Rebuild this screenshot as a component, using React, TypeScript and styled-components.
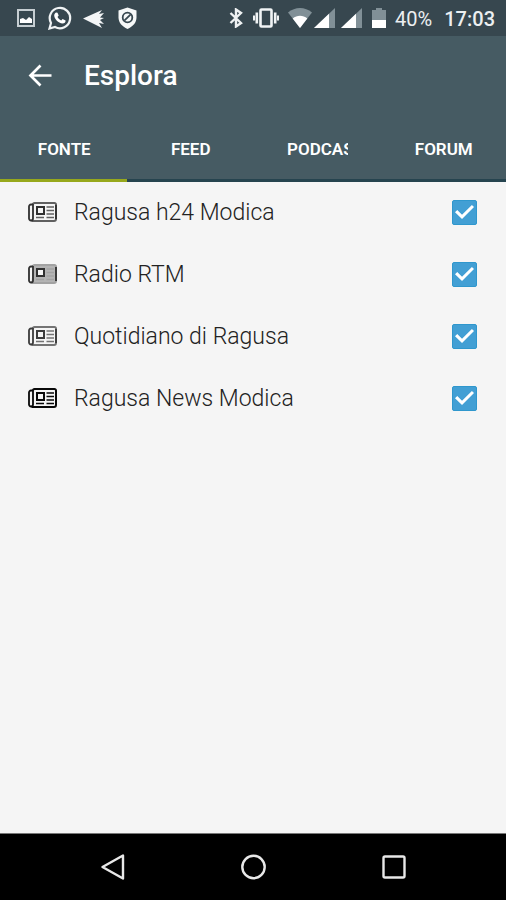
import React, { useState } from "react";
import styled, { createGlobalStyle } from "styled-components";

const GlobalStyle = createGlobalStyle`
  * { box-sizing: border-box; }
  body {
    margin: 0;
    background: #f5f5f5;
    font-family: Roboto, "Noto Sans", sans-serif;
  }
`;

const Screen = styled.div`
  min-height: 100vh;
  display: flex;
  flex-direction: column;
  background: #f5f5f5;
`;

const StatusBar = styled.div`
  height: 36px;
  padding: 0 11px 0 14px;
  display: flex;
  align-items: center;
  justify-content: space-between;
  background: #37474f;
  color: #eceff1;
`;

const Notifications = styled.div`
  display: flex;
  align-items: center;
  gap: 10px;
`;

const SystemIcons = styled.div`
  display: flex;
  align-items: center;
`;

const Glyph = styled.svg<{ $gap?: number }>`
  display: block;
  flex: none;
  margin-left: ${(p) => p.$gap ?? 0}px;
`;

const StatusText = styled.span<{ $gap: number; $strong?: boolean }>`
  margin-left: ${(p) => p.$gap}px;
  padding-top: 2px;
  font-size: 20px;
  line-height: 24px;
  font-weight: ${(p) => (p.$strong ? 500 : 400)};
`;

const Header = styled.header`
  background: #465b63;
  color: #fff;
`;

const TitleBar = styled.div`
  height: 80px;
  padding: 0 28px;
  display: flex;
  align-items: center;
  gap: 32px;
`;

const PlainButton = styled.button`
  display: flex;
  padding: 0;
  border: 0;
  background: none;
  color: inherit;
  cursor: pointer;
`;

const Title = styled.h1`
  margin: 0;
  font-size: 28px;
  line-height: 32px;
  font-weight: 500;
`;

const Tabs = styled.div`
  display: grid;
  grid-template-columns: repeat(4, 1fr);
`;

const Tab = styled.button<{ $active: boolean }>`
  height: 66px;
  min-width: 0;
  padding: 2px 32px 0 34px;
  border: 0;
  border-bottom: 3px solid ${(p) => (p.$active ? "#97a81c" : "#26444f")};
  background: none;
  color: #fff;
  font-family: inherit;
  font-size: 17px;
  line-height: 20px;
  font-weight: 600;
  cursor: pointer;
`;

const TabLabel = styled.span<{ $long: boolean }>`
  display: block;
  overflow: hidden;
  white-space: nowrap;
  text-align: ${(p) => (p.$long ? "left" : "center")};
`;

const List = styled.ul`
  flex: 1;
  margin: 0;
  padding: 0;
  list-style: none;
`;

const Row = styled.label`
  height: 62px;
  padding: 0 29px 2px 28px;
  display: flex;
  align-items: center;
  gap: 17px;
  color: #222;
`;

const SourceName = styled.span`
  flex: 1;
  padding-top: 1px;
  font-size: 23px;
  line-height: 28px;
  font-weight: 300;
`;

const Checkbox = styled.input`
  appearance: none;
  width: 25px;
  height: 25px;
  margin: 0;
  display: grid;
  place-content: center;
  border: 1px solid #2f97cd;
  border-radius: 2px;
  background: #fff;

  &:checked { background: #429fd4; }

  &:checked::before {
    content: "";
    width: 19px;
    height: 14px;
    background: #fff;
    clip-path: polygon(0 52%, 12% 36%, 37% 70%, 89% 0, 100% 14%, 37% 100%);
  }
`;

const NavBar = styled.nav`
  height: 67px;
  padding: 0 42px;
  display: grid;
  grid-template-columns: repeat(3, 1fr);
  justify-items: center;
  align-items: center;
  border-top: 1px solid #777;
  background: #000;
  color: #e8e8e8;
`;

const NewsIcon = ({ tone, shade, filled }: { tone: string; shade: string; filled?: boolean }) => (
  <Glyph width="29" height="20" viewBox="0 0 29 20" fill="none" stroke={tone}>
    <path d="M5 2.500a1.500 1.500 0 0 1 1.500-1.500H26.500a1.500 1.500 0 0 1 1.500 1.500V17a2 2 0 0 1-2 2H3.500" strokeWidth="2" stroke={shade} fill={filled ? "#b4b4b4" : "none"} />
    <path d="M5 2V16.500a2 2 0 0 1-4 0V4.500a2 2 0 0 1 2-2H5M28 3V17" strokeWidth="1.800" />
    <rect x="9" y="5" width="7" height="7" strokeWidth="2" fill="#f5f5f5" />
    <path d="M18.500 5H26M18.500 8.500H26M18.500 12H26M8 15.500H16M18.500 15.500H26" strokeWidth="1.700" stroke={shade} />
  </Glyph>
);

const Signal = ({ gap }: { gap: number }) => (
  <Glyph $gap={gap} width="21" height="20" viewBox="0 0 21 20">
    <path d="M0 20L21 0V20z" fill="#819097" />
    <path d="M0 20L15 5.700V20z" fill="#fff" />
  </Glyph>
);

const sources = [
  { name: "Ragusa h24 Modica", tone: "#303030", shade: "#606060" },
  { name: "Radio RTM", tone: "#303030", shade: "#a2a2a2", filled: true },
  { name: "Quotidiano di Ragusa", tone: "#3c3c3c", shade: "#747474" },
  { name: "Ragusa News Modica", tone: "#090909", shade: "#090909" },
];

const tabs = ["FONTE", "FEED", "PODCAST", "FORUM"];

export default function App() {
  const [active, setActive] = useState(0);
  return (
    <Screen>
      <GlobalStyle />
      <StatusBar>
        <Notifications>
          <Glyph width="24" height="24" viewBox="0 0 24 24">
            <rect x="4" y="4" width="16" height="16" fill="none" stroke="#c6ced2" strokeWidth="2" />
            <path d="M6 17v-4l3-1 3 2 3-3 3 2v4z" fill="#fff" />
          </Glyph>
          <Glyph width="24" height="24" viewBox="0 0 24 24">
            <path d="M1.500 22.500L3 17A10.200 10.200 0 1 1 7 21z" fill="none" stroke="#f1f4f5" strokeWidth="2.200" />
            <path d="M8 6.500l1.500.2 1.200 2.800-1.200 1.600c.8 1.500 2 2.700 3.700 3.400l1.400-1.500 3 1.400c.1 1.700-1.200 3-3 3-4.500-.5-8-4.200-8.400-8 .1-1.300.8-2.400 1.800-2.900z" fill="#fff" />
          </Glyph>
          <Glyph width="24" height="24" viewBox="0 0 24 24" fill="#f4f6f7">
            <path d="M1 12.500L20 4l-3 4 5-1-4 4.500 4 .5-4 2 4 4-5-1 3 5z" />
          </Glyph>
          <Glyph width="24" height="24" viewBox="0 0 24 24">
            <path d="M11.500 1.500l9 3v7c0 5-3.500 9-9 11.500-5.500-2.500-9-6.500-9-11.500v-7z" fill="#f6f8f8" />
            <circle cx="11.500" cy="11.500" r="4.800" fill="none" stroke="#37474f" strokeWidth="1.800" />
            <path d="M8.300 14.700l6.400-6.400" stroke="#37474f" strokeWidth="1.800" />
          </Glyph>
        </Notifications>
        <SystemIcons>
          <Glyph width="14" height="20" viewBox="0 0 14 20" fill="none" stroke="#eef1f2" strokeWidth="2.400">
            <path d="M1.500 5l10.500 10-5 3.500v-17l5 3.500L1.500 15" />
          </Glyph>
          <Glyph $gap={9} width="28" height="20" viewBox="0 0 28 20" fill="none" stroke="#f1f4f5">
            <rect x="8.500" y="1.500" width="11" height="17" rx="1" strokeWidth="2.600" />
            <path d="M4.800 4.500v11M23.200 4.500v11" strokeWidth="2.600" />
            <path d="M2 7.500v5M26 7.500v5" strokeWidth="2" />
          </Glyph>
          <Glyph $gap={8} width="24" height="20" viewBox="0 0 24 20">
            <path d="M12 20L0 4.500C7-1.500 17-1.500 24 4.500z" fill="#819097" />
            <path d="M12 20L4.700 10.500c4.300-3.600 10.300-3.600 14.600 0z" fill="#fff" />
          </Glyph>
          <Signal gap={2} />
          <Signal gap={6} />
          <Glyph $gap={10} width="14" height="20" viewBox="0 0 14 20">
            <path d="M4 0h6v2h4v18H0V2h4z" fill="#819097" />
            <path d="M0 12h14v8H0z" fill="#fff" />
          </Glyph>
          <StatusText $gap={9}>40%</StatusText>
          <StatusText $gap={12} $strong>17:03</StatusText>
        </SystemIcons>
      </StatusBar>
      <Header>
        <TitleBar>
          <PlainButton aria-label="Indietro">
            <Glyph width="24" height="24" viewBox="0 0 24 24" fill="none" stroke="currentColor" strokeWidth="2.700">
              <path d="M23.500 11.500H3M12.500 1.500l-10 10 10 10" />
            </Glyph>
          </PlainButton>
          <Title>Esplora</Title>
        </TitleBar>
        <Tabs role="tablist">
          {tabs.map((t, i) => (
            <Tab key={t} role="tab" aria-selected={i === active} $active={i === active} onClick={() => setActive(i)}>
              <TabLabel $long={t.length > 6}>{t}</TabLabel>
            </Tab>
          ))}
        </Tabs>
      </Header>
      <List>
        {sources.map((s) => (
          <li key={s.name}>
            <Row>
              <NewsIcon tone={s.tone} shade={s.shade} filled={s.filled} />
              <SourceName>{s.name}</SourceName>
              <Checkbox type="checkbox" defaultChecked />
            </Row>
          </li>
        ))}
      </List>
      <NavBar>
        <PlainButton aria-label="Indietro">
          <Glyph width="26" height="26" viewBox="0 0 26 26" fill="none" stroke="currentColor" strokeWidth="2.400" strokeLinejoin="round">
            <path d="M3.500 13L24 1.500v23z" />
          </Glyph>
        </PlainButton>
        <PlainButton aria-label="Home">
          <Glyph width="26" height="26" viewBox="0 0 26 26" fill="none" stroke="currentColor" strokeWidth="2.400">
            <circle cx="13.500" cy="13" r="11.200" />
          </Glyph>
        </PlainButton>
        <PlainButton aria-label="Recenti">
          <Glyph width="26" height="26" viewBox="0 0 26 26" fill="none" stroke="currentColor" strokeWidth="2.400">
            <rect x="2.500" y="2.500" width="21" height="21" rx="1.500" />
          </Glyph>
        </PlainButton>
      </NavBar>
    </Screen>
  );
}
